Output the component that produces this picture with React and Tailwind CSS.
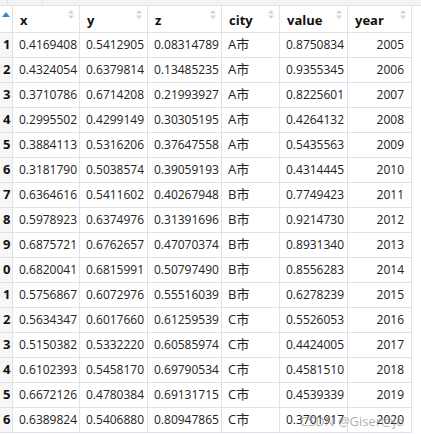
const COLUMNS = [
  { key: "x", label: "x" },
  { key: "y", label: "y" },
  { key: "z", label: "z" },
  { key: "city", label: "city" },
  { key: "value", label: "value" },
  { key: "year", label: "year", right: true },
];

const ROWS = [
  ["1", "0.4169408", "0.5412905", "0.08314789", "A市", "0.8750834", "2005"],
  ["2", "0.4324054", "0.6379814", "0.13485235", "A市", "0.9355345", "2006"],
  ["3", "0.3710786", "0.6714208", "0.21993927", "A市", "0.8225601", "2007"],
  ["4", "0.2995502", "0.4299149", "0.30305195", "A市", "0.4264132", "2008"],
  ["5", "0.3884113", "0.5316206", "0.37647558", "A市", "0.5435563", "2009"],
  ["6", "0.3181790", "0.5038574", "0.39059193", "A市", "0.4314445", "2010"],
  ["7", "0.6364616", "0.5411602", "0.40267948", "B市", "0.7749423", "2011"],
  ["8", "0.5978923", "0.6374976", "0.31391696", "B市", "0.9214730", "2012"],
  ["9", "0.6875721", "0.6762657", "0.47070374", "B市", "0.8931340", "2013"],
  ["0", "0.6820041", "0.6815991", "0.50797490", "B市", "0.8556283", "2014"],
  ["1", "0.5756867", "0.6072976", "0.55516039", "B市", "0.6278239", "2015"],
  ["2", "0.5634347", "0.6017660", "0.61259539", "C市", "0.5526053", "2016"],
  ["3", "0.5150382", "0.5332220", "0.60585974", "C市", "0.4424005", "2017"],
  ["4", "0.6102393", "0.5458170", "0.69790534", "C市", "0.4581510", "2018"],
  ["5", "0.6672126", "0.4780384", "0.69131715", "C市", "0.4539339", "2019"],
  ["6", "0.6389824", "0.5406880", "0.80947865", "C市", "0.3701917", "2020"],
];

const GRID = "grid grid-cols-[13px_67px_68px_74px_58px_68px_64px]";

function SortIcon() {
  return (
    <svg
      className="absolute right-[5px] top-[4px]"
      width="6"
      height="9"
      viewBox="0 0 6 9"
      aria-hidden="true"
    >
      <path d="M3 0 L6 3.5 L0 3.5 Z" fill="#cfd3d8" />
      <path d="M3 9 L6 5.5 L0 5.5 Z" fill="#cfd3d8" />
    </svg>
  );
}

export default function App() {
  return (
    <div
      className="relative w-[421px] h-[434px] overflow-hidden bg-white text-[12px] text-[#222]"
      style={{ fontFamily: '"Open Sans", "Noto Sans CJK SC", sans-serif' }}
    >
      {/* toolbar sliver above the viewer */}
      <div className="flex h-[6px] border-b border-[#dfe2e6] bg-[#f1f3f5]">
        <div className="w-[8px] border-r border-[#e2e5e8]" />
        <div className="w-[35px] border-r border-[#e2e5e8]" />
      </div>

      <div className="w-[412px]">
        {/* header */}
        <div className={`${GRID} h-[27px]`}>
          <div className="relative border-r border-b border-[#dfe2e6]">
            <svg
              className="absolute left-[2px] top-[6px]"
              width="8"
              height="5"
              viewBox="0 0 8 5"
              aria-hidden="true"
            >
              <path d="M4 0 L8 5 L0 5 Z" fill="#2f86d6" />
            </svg>
          </div>
          {COLUMNS.map((c) => (
            <div
              key={c.key}
              className="relative flex items-end border-r border-b border-[#dfe2e6] pb-[2px] pl-[7px] font-bold text-[13px] text-[#111]"
            >
              {c.label}
              <SortIcon />
            </div>
          ))}
        </div>

        {/* body */}
        {ROWS.map((r, i) => (
          <div key={i} className={`${GRID} h-[25px]`}>
            <div className="flex items-center border-r border-b border-[#dfe2e6] bg-[#f6f7f8] pl-[3px] font-bold text-[13px] text-[#111]">
              {r[0]}
            </div>
            {r.slice(1).map((v, j) => (
              <div
                key={j}
                className={`flex items-center border-r border-b border-[#dfe2e6] ${
                  COLUMNS[j].right ? "justify-end pr-[7px]" : "pl-[6px]"
                } ${COLUMNS[j].key === "city" ? "text-[13px]" : ""}`}
              >
                {v}
              </div>
            ))}
          </div>
        ))}
      </div>

      {/* watermark */}
      <div className="pointer-events-none absolute left-[300px] top-[412px] text-[13px] text-[#8c8c8c]/70">
        CSDN @Giser@jo
      </div>
    </div>
  );
}
